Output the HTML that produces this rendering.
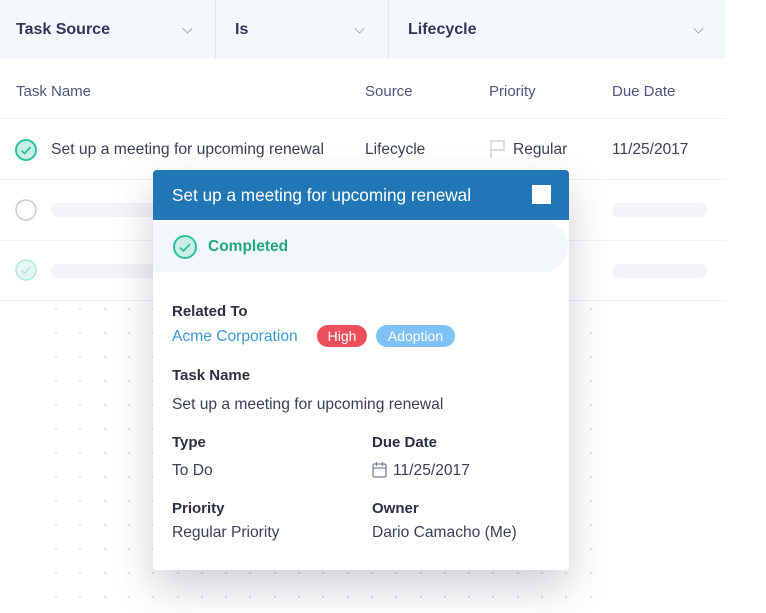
<!DOCTYPE html>
<html><head><style>
*{margin:0;padding:0;box-sizing:border-box}
body{width:766px;height:613px;background:#fff;font-family:"Liberation Sans",sans-serif;position:relative;overflow:hidden;color:#2c2f45}
.a{position:absolute;white-space:nowrap}
.filter{position:absolute;top:0;left:0;width:726px;height:59px;background:#f4f7fb}
.div{position:absolute;top:0;width:1px;height:59px;background:#e3e8ef}
.ft{font-size:16px;font-weight:bold;color:#33365a;top:21px}
.chev{position:absolute;top:24px;width:9px;height:9px;border-right:1.3px solid #9aa0b5;border-bottom:1.3px solid #9aa0b5;transform:rotate(45deg) scale(.8)}
.th{font-size:15px;color:#50547a;top:83px}
.line{position:absolute;left:0;width:726px;height:1px;background:#eef1f5}
.sk{position:absolute;height:14px;border-radius:7px;background:#f2f4f8}
.dot{position:absolute;width:2px;height:2px;background:#d6d9e0;border-radius:1px}
.card{position:absolute;left:153px;top:170px;width:416px;height:400px;background:#fff;border-radius:4px;box-shadow:0 18px 40px rgba(40,45,70,.22);overflow:hidden}
.lab{font-size:15px;font-weight:bold;color:#2c2f45}
.val{font-size:15.6px;color:#3b3e58}
</style></head><body>
<div class="filter"></div>
<div class="div" style="left:215px"></div><div class="div" style="left:388px"></div>
<div class="a ft" style="left:16px">Task Source</div><div class="chev" style="left:183px"></div>
<div class="a ft" style="left:235px">Is</div><div class="chev" style="left:355px"></div>
<div class="a ft" style="left:408px">Lifecycle</div><div class="chev" style="left:694px"></div>

<div class="a th" style="left:16px">Task Name</div>
<div class="a th" style="left:365px">Source</div>
<div class="a th" style="left:489px">Priority</div>
<div class="a th" style="left:612px">Due Date</div>
<div class="line" style="top:118px"></div>
<div class="line" style="top:179px"></div>
<div class="line" style="top:240px"></div>
<div class="line" style="top:300px"></div>

<svg class="a" style="left:14px;top:138px" width="24" height="24"><circle cx="12" cy="12" r="10" fill="#c9efe6" stroke="#2cc2a0" stroke-width="2"/><path d="M7.5 12.5l3 3 6-6.5" fill="none" stroke="#2cc2a0" stroke-width="1.8"/></svg>
<div class="a" style="left:51px;top:141px;font-size:15.7px;color:#3b3e58">Set up a meeting for upcoming renewal</div>
<div class="a" style="left:365px;top:141px;font-size:15.5px;color:#3b3e58">Lifecycle</div>
<svg class="a" style="left:489px;top:139px" width="18" height="20"><path d="M2 1v18M2 2h13v9H2" fill="none" stroke="#cfd3dd" stroke-width="1.5"/></svg>
<div class="a" style="left:513px;top:141px;font-size:15.5px;color:#3b3e58">Regular</div>
<div class="a" style="left:612px;top:141px;font-size:15.5px;color:#3b3e58">11/25/2017</div>

<svg class="a" style="left:15px;top:199px" width="22" height="22"><circle cx="11" cy="11" r="10" fill="#fff" stroke="#c7cbd4" stroke-width="1.5"/></svg>
<div class="sk" style="left:51px;top:203px;width:110px"></div>
<div class="sk" style="left:612px;top:203px;width:95px"></div>
<svg class="a" style="left:15px;top:259px" width="22" height="22"><circle cx="11" cy="11" r="10" fill="#e6f7f3" stroke="#b5e8dc" stroke-width="1.5"/><path d="M6.5 11.5l3 3 6-6.5" fill="none" stroke="#b5e8dc" stroke-width="1.6"/></svg>
<div class="sk" style="left:51px;top:264px;width:110px"></div>
<div class="sk" style="left:612px;top:264px;width:95px"></div>

<div id="dots"></div>
<script>
var h='';for(var y=308;y<=596;y+=24)for(var x=55;x<=612;x+=24.3)h+='<div class="dot" style="left:'+Math.round(x)+'px;top:'+y+'px"></div>';document.getElementById('dots').innerHTML=h;
</script>

<div class="card">
<div style="height:50px;background:#2176b5;position:relative">
<div class="a" style="left:19px;top:15px;font-size:17.2px;color:#fff">Set up a meeting for upcoming renewal</div>
<div class="a" style="left:379px;top:15px;width:19px;height:19px;background:#fff"></div>
</div>
<div style="position:absolute;left:0;top:52px;width:415px;height:50px;background:#f3f7fb;border-radius:0 25px 25px 0"></div>
<svg class="a" style="left:19px;top:64px" width="26" height="26"><circle cx="13" cy="13" r="11" fill="#c9efe6" stroke="#2cc2a0" stroke-width="2"/><path d="M8 13.5l3.5 3.5 6.5-7" fill="none" stroke="#2cc2a0" stroke-width="1.8"/></svg>
<div class="a" style="left:55px;top:68px;font-size:15.5px;font-weight:bold;color:#1fa882">Completed</div>
<div class="a lab" style="left:19px;top:133px">Related To</div>
<div class="a" style="left:19px;top:158px;font-size:15.6px;color:#3a9ad9">Acme Corporation</div>
<div class="a" style="left:164px;top:155px;width:50px;height:22px;border-radius:11px;background:#ec4f5b;color:#fff;font-size:14px;text-align:center;line-height:22px">High</div>
<div class="a" style="left:223px;top:155px;width:79px;height:22px;border-radius:11px;background:#7ec1f7;color:#fff;font-size:14px;text-align:center;line-height:22px">Adoption</div>
<div class="a lab" style="left:19px;top:197px">Task Name</div>
<div class="a val" style="left:19px;top:226px">Set up a meeting for upcoming renewal</div>
<div class="a lab" style="left:19px;top:264px">Type</div>
<div class="a val" style="left:19px;top:292px">To Do</div>
<div class="a lab" style="left:219px;top:264px">Due Date</div>
<svg class="a" style="left:219px;top:291px" width="15" height="17"><rect x="1" y="3" width="13" height="13" rx="1.5" fill="none" stroke="#7c8098" stroke-width="1.3"/><path d="M1 7h13M4.5 1v4M10.5 1v4" stroke="#7c8098" stroke-width="1.3"/></svg>
<div class="a val" style="left:240px;top:292px">11/25/2017</div>
<div class="a lab" style="left:19px;top:330px">Priority</div>
<div class="a val" style="left:19px;top:354px">Regular Priority</div>
<div class="a lab" style="left:219px;top:330px">Owner</div>
<div class="a val" style="left:219px;top:354px">Dario Camacho (Me)</div>
</div>
</body></html>
